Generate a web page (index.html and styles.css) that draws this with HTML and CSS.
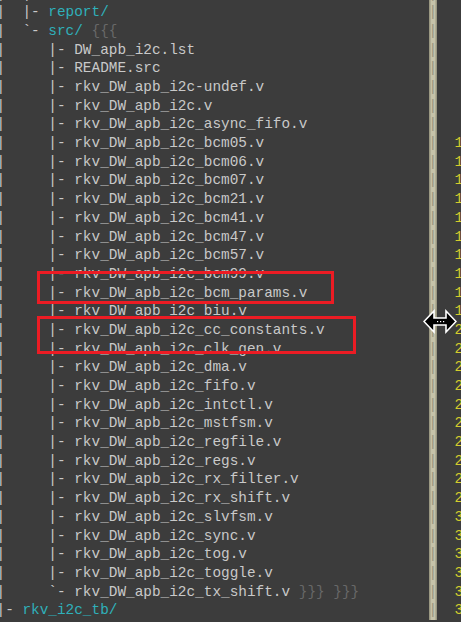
FILE: index.html
```html
<!DOCTYPE html>
<html lang="en">
<head>
    <meta charset="UTF-8">
    <meta name="viewport" content="width=device-width, initial-scale=1.0">
    <title>NERDTree - rkv_DW_apb_i2c</title>
    <link rel="stylesheet" href="styles.css">
</head>
<body>
    <div class="screen">
        <div class="rows">
            <div class="row"><span class="pane">|  |- <span class="dir">doc/</span></span><span class="split">|</span><span class="nr">   2</span></div>
            <div class="row"><span class="pane">|  |- <span class="dir">report/</span></span><span class="split">|</span><span class="nr">   3</span></div>
            <div class="row"><span class="pane">|  `- <span class="dir">src/</span> <span class="fold">{{{</span></span><span class="split">|</span><span class="nr">   4</span></div>
            <div class="row"><span class="pane">|     |- DW_apb_i2c.lst</span><span class="split">|</span><span class="nr">   5</span></div>
            <div class="row"><span class="pane">|     |- README.src</span><span class="split">|</span><span class="nr">   6</span></div>
            <div class="row"><span class="pane">|     |- rkv_DW_apb_i2c-undef.v</span><span class="split">|</span><span class="nr">   7</span></div>
            <div class="row"><span class="pane">|     |- rkv_DW_apb_i2c.v</span><span class="split">|</span><span class="nr">   8</span></div>
            <div class="row"><span class="pane">|     |- rkv_DW_apb_i2c_async_fifo.v</span><span class="split">|</span><span class="nr">   9</span></div>
            <div class="row"><span class="pane">|     |- rkv_DW_apb_i2c_bcm05.v</span><span class="split">|</span><span class="nr">  10</span></div>
            <div class="row"><span class="pane">|     |- rkv_DW_apb_i2c_bcm06.v</span><span class="split">|</span><span class="nr">  11</span></div>
            <div class="row"><span class="pane">|     |- rkv_DW_apb_i2c_bcm07.v</span><span class="split">|</span><span class="nr">  12</span></div>
            <div class="row"><span class="pane">|     |- rkv_DW_apb_i2c_bcm21.v</span><span class="split">|</span><span class="nr">  13</span></div>
            <div class="row"><span class="pane">|     |- rkv_DW_apb_i2c_bcm41.v</span><span class="split">|</span><span class="nr">  14</span></div>
            <div class="row"><span class="pane">|     |- rkv_DW_apb_i2c_bcm47.v</span><span class="split">|</span><span class="nr">  15</span></div>
            <div class="row"><span class="pane">|     |- rkv_DW_apb_i2c_bcm57.v</span><span class="split">|</span><span class="nr">  16</span></div>
            <div class="row"><span class="pane">|     |- rkv_DW_apb_i2c_bcm99.v</span><span class="split">|</span><span class="nr">  17</span></div>
            <div class="row"><span class="pane">|     |- rkv_DW_apb_i2c_bcm_params.v</span><span class="split">|</span><span class="nr">  18</span></div>
            <div class="row"><span class="pane">|     |- rkv_DW_apb_i2c_biu.v</span><span class="split">|</span><span class="nr">  19</span></div>
            <div class="row"><span class="pane">|     |- rkv_DW_apb_i2c_cc_constants.v</span><span class="split">|</span><span class="nr">  20</span></div>
            <div class="row"><span class="pane">|     |- rkv_DW_apb_i2c_clk_gen.v</span><span class="split">|</span><span class="nr">  21</span></div>
            <div class="row"><span class="pane">|     |- rkv_DW_apb_i2c_dma.v</span><span class="split">|</span><span class="nr">  22</span></div>
            <div class="row"><span class="pane">|     |- rkv_DW_apb_i2c_fifo.v</span><span class="split">|</span><span class="nr">  23</span></div>
            <div class="row"><span class="pane">|     |- rkv_DW_apb_i2c_intctl.v</span><span class="split">|</span><span class="nr">  24</span></div>
            <div class="row"><span class="pane">|     |- rkv_DW_apb_i2c_mstfsm.v</span><span class="split">|</span><span class="nr">  25</span></div>
            <div class="row"><span class="pane">|     |- rkv_DW_apb_i2c_regfile.v</span><span class="split">|</span><span class="nr">  26</span></div>
            <div class="row"><span class="pane">|     |- rkv_DW_apb_i2c_regs.v</span><span class="split">|</span><span class="nr">  27</span></div>
            <div class="row"><span class="pane">|     |- rkv_DW_apb_i2c_rx_filter.v</span><span class="split">|</span><span class="nr">  28</span></div>
            <div class="row"><span class="pane">|     |- rkv_DW_apb_i2c_rx_shift.v</span><span class="split">|</span><span class="nr">  29</span></div>
            <div class="row"><span class="pane">|     |- rkv_DW_apb_i2c_slvfsm.v</span><span class="split">|</span><span class="nr">  30</span></div>
            <div class="row"><span class="pane">|     |- rkv_DW_apb_i2c_sync.v</span><span class="split">|</span><span class="nr">  31</span></div>
            <div class="row"><span class="pane">|     |- rkv_DW_apb_i2c_tog.v</span><span class="split">|</span><span class="nr">  32</span></div>
            <div class="row"><span class="pane">|     |- rkv_DW_apb_i2c_toggle.v</span><span class="split">|</span><span class="nr">  33</span></div>
            <div class="row"><span class="pane">|     `- rkv_DW_apb_i2c_tx_shift.v <span class="fold">}}} }}}</span></span><span class="split">|</span><span class="nr">  34</span></div>
            <div class="row"><span class="pane">|- <span class="dir">rkv_i2c_tb/</span></span><span class="split">|</span><span class="nr">  35</span></div>
        </div>

        <!-- annotation boxes drawn over the screenshot -->
        <div class="mark mark-params"></div>
        <div class="mark mark-clk"></div>

        <!-- resize cursor on the split -->
        <svg class="cursor" width="34" height="25" viewBox="0 0 34 25">
            <polygon points="1,12.5 11,2 11,9 23,9 23,2 33,12.5 23,23 23,16 11,16 11,23" fill="#000" stroke="#fff" stroke-width="1.6" stroke-linejoin="miter"/>
            <rect x="14" y="12" width="1.2" height="1.2" fill="#fff"/>
            <rect x="17" y="12" width="1.2" height="1.2" fill="#fff"/>
            <rect x="20" y="12" width="1.2" height="1.2" fill="#fff"/>
        </svg>
    </div>
</body>
</html>
```

FILE: styles.css
```css
body {
    margin: 0;
    background-color: #3c3c3c;
}

.screen {
    position: relative;
    width: 461px;
    height: 622px;
    overflow: hidden;
    background-color: #3c3c3c;
    font-family: "Liberation Mono", "DejaVu Sans Mono", monospace;
    font-size: 14.4px;
    line-height: 18.69px;
    color: #c9c9c9;
}

.rows {
    margin-top: -15.4px;
    margin-left: -3.5px;
}

.row {
    display: grid;
    grid-template-columns: 432px 8.64px 40px;
    white-space: pre;
}

.pane {
    overflow: hidden;
}

.dir {
    color: #2fb0ba;
}

.fold {
    color: #686868;
}

.split {
    background-color: #c6c3a9;
    box-shadow: inset 1.5px 0 #9a9882, inset -1.5px 0 #9a9882;
    color: #96947f;
    text-align: center;
}

.nr {
    color: #d4cc2c;
}

.mark {
    position: absolute;
    border: 3px solid #ec1c24;
}

.mark-params {
    left: 37px;
    top: 271px;
    width: 291px;
    height: 27px;
}

.mark-clk {
    left: 37px;
    top: 316px;
    width: 313px;
    height: 32px;
}

.cursor {
    position: absolute;
    left: 423px;
    top: 309px;
}
```
